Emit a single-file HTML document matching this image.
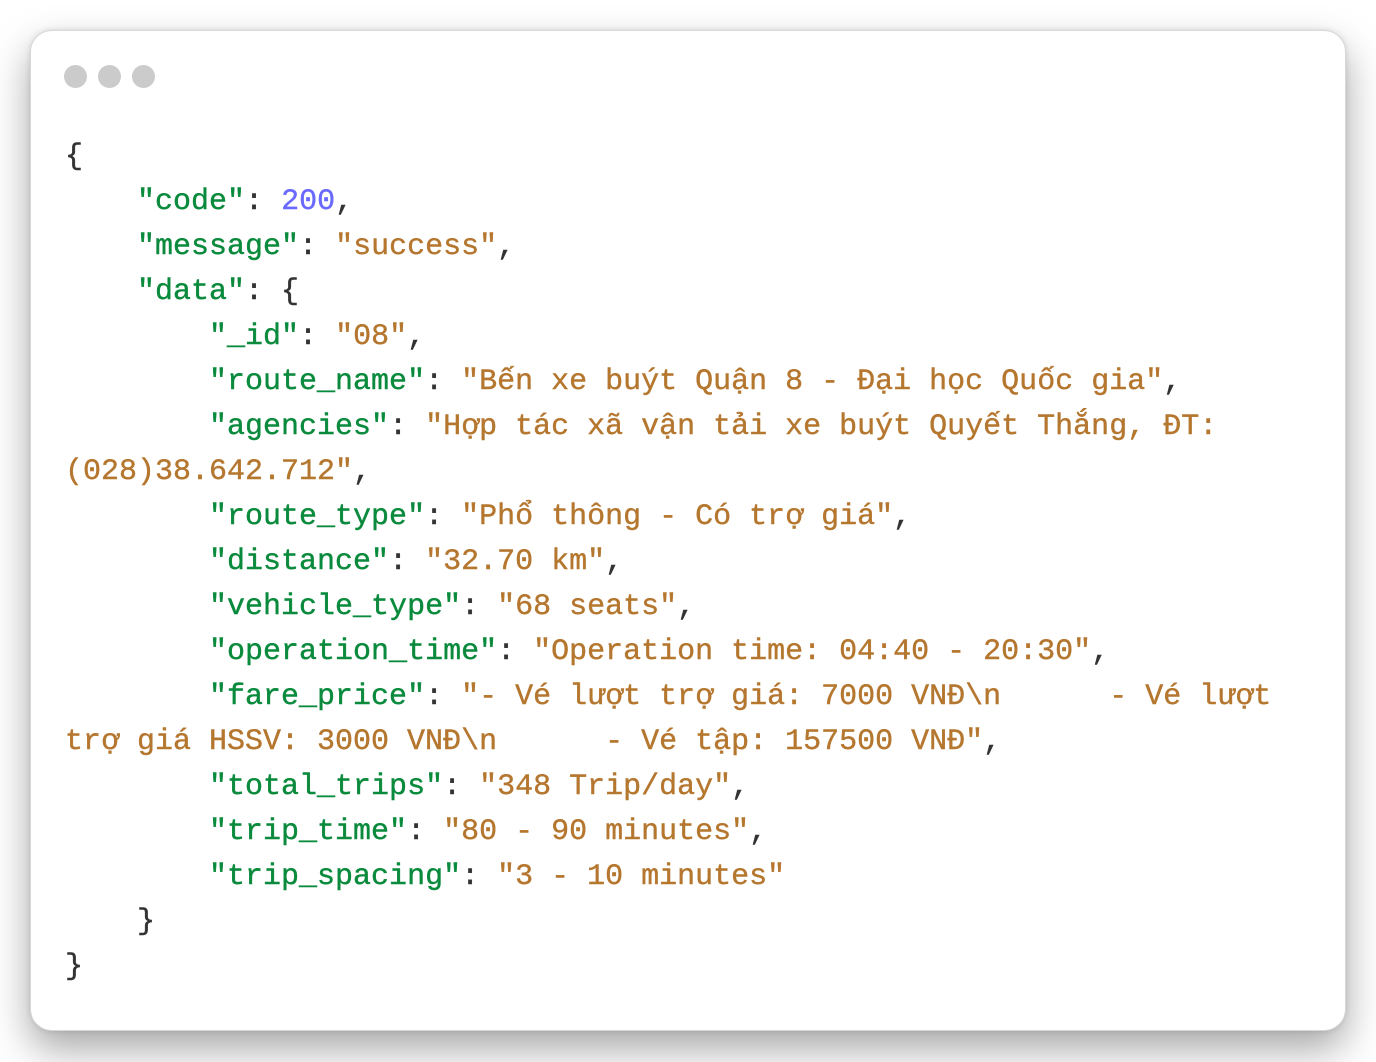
<!DOCTYPE html>
<html><head><meta charset="utf-8"><style>
html,body{margin:0;padding:0;width:1376px;height:1062px;background:#fff;overflow:hidden}
.card{position:absolute;left:30px;top:30px;width:1314px;height:999px;background:#fff;border:1px solid #d8d8d8;border-radius:22px;box-shadow:0 18px 40px rgba(0,0,0,.35),0 0 6px rgba(0,0,0,.12)}
.dot{position:absolute;top:34px;width:23px;height:23px;border-radius:50%;background:#cbcbcb}
pre{position:absolute;left:34px;top:104px;margin:0;font-family:"Liberation Mono","DejaVu Sans Mono",monospace;font-size:30px;line-height:45px;color:#333;white-space:pre;-webkit-text-stroke:0.4px currentColor}
.k{color:#0a8a3c}.s{color:#b5772f}.n{color:#6a6aff}
</style></head><body>
<div class="card">
<div class="dot" style="left:33px"></div><div class="dot" style="left:67px"></div><div class="dot" style="left:101px"></div>
<pre>{
    <span class="k">"code"</span>: <span class="n">200</span>,
    <span class="k">"message"</span>: <span class="s">"success"</span>,
    <span class="k">"data"</span>: {
        <span class="k">"_id"</span>: <span class="s">"08"</span>,
        <span class="k">"route_name"</span>: <span class="s">"Bến xe buýt Quận 8 - Đại học Quốc gia"</span>,
        <span class="k">"agencies"</span>: <span class="s">"Hợp tác xã vận tải xe buýt Quyết Thắng, ĐT:
(028)38.642.712"</span>,
        <span class="k">"route_type"</span>: <span class="s">"Phổ thông - Có trợ giá"</span>,
        <span class="k">"distance"</span>: <span class="s">"32.70 km"</span>,
        <span class="k">"vehicle_type"</span>: <span class="s">"68 seats"</span>,
        <span class="k">"operation_time"</span>: <span class="s">"Operation time: 04:40 - 20:30"</span>,
        <span class="k">"fare_price"</span>: <span class="s">"- Vé lượt trợ giá: 7000 VNĐ\n      - Vé lượt
trợ giá HSSV: 3000 VNĐ\n      - Vé tập: 157500 VNĐ"</span>,
        <span class="k">"total_trips"</span>: <span class="s">"348 Trip/day"</span>,
        <span class="k">"trip_time"</span>: <span class="s">"80 - 90 minutes"</span>,
        <span class="k">"trip_spacing"</span>: <span class="s">"3 - 10 minutes"</span>
    }
}</pre>
</div>
</body></html>
